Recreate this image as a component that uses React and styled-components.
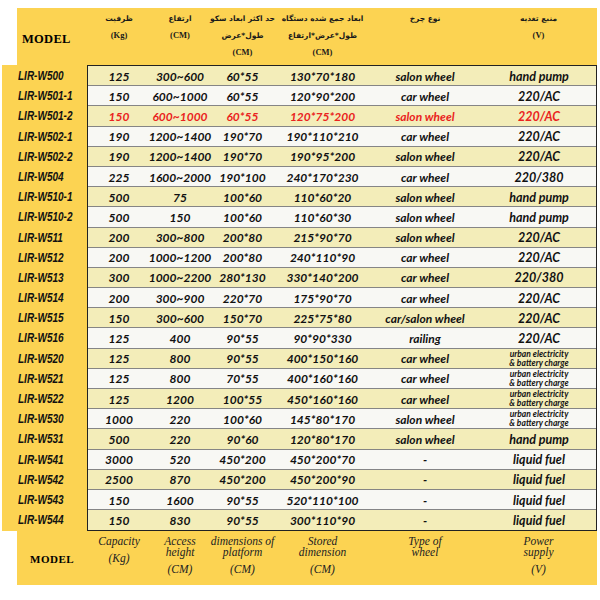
import React from 'react';
import styled, { createGlobalStyle } from 'styled-components';

const URBAN = 'urban';

const rows = [
  ['LIR-W500', '125', '300~600', '60*55', '130*70*180', 'salon wheel', 'hand pump'],
  ['LIR-W501-1', '150', '600~1000', '60*55', '120*90*200', 'car wheel', '220/AC'],
  ['LIR-W501-2', '150', '600~1000', '60*55', '120*75*200', 'salon wheel', '220/AC', true],
  ['LIR-W502-1', '190', '1200~1400', '190*70', '190*110*210', 'car wheel', '220/AC'],
  ['LIR-W502-2', '190', '1200~1400', '190*70', '190*95*200', 'salon wheel', '220/AC'],
  ['LIR-W504', '225', '1600~2000', '190*100', '240*170*230', 'car wheel', '220/380'],
  ['LIR-W510-1', '500', '75', '100*60', '110*60*20', 'salon wheel', 'hand pump'],
  ['LIR-W510-2', '500', '150', '100*60', '110*60*30', 'salon wheel', 'hand pump'],
  ['LIR-W511', '200', '300~800', '200*80', '215*90*70', 'salon wheel', '220/AC'],
  ['LIR-W512', '200', '1000~1200', '200*80', '240*110*90', 'car wheel', '220/AC'],
  ['LIR-W513', '300', '1000~2200', '280*130', '330*140*200', 'car wheel', '220/380'],
  ['LIR-W514', '200', '300~900', '220*70', '175*90*70', 'car wheel', '220/AC'],
  ['LIR-W515', '150', '300~600', '150*70', '225*75*80', 'car/salon wheel', '220/AC'],
  ['LIR-W516', '125', '400', '90*55', '90*90*330', 'railing', '220/AC'],
  ['LIR-W520', '125', '800', '90*55', '400*150*160', 'car wheel', URBAN],
  ['LIR-W521', '125', '800', '70*55', '400*160*160', 'car wheel', URBAN],
  ['LIR-W522', '125', '1200', '100*55', '450*160*160', 'car wheel', URBAN],
  ['LIR-W530', '1000', '220', '100*60', '145*80*170', 'salon wheel', URBAN],
  ['LIR-W531', '500', '220', '90*60', '120*80*170', 'salon wheel', 'hand pump'],
  ['LIR-W541', '3000', '520', '450*200', '450*200*70', '-', 'liquid fuel'],
  ['LIR-W542', '2500', '870', '450*200', '450*200*90', '-', 'liquid fuel'],
  ['LIR-W543', '150', '1600', '90*55', '520*110*100', '-', 'liquid fuel'],
  ['LIR-W544', '150', '830', '90*55', '300*110*90', '-', 'liquid fuel'],
];

const headers = [
  { fa: ['ظرفیت'], unit: '(Kg)' },
  { fa: ['ارتفاع'], unit: '(CM)' },
  { fa: ['حد اکثر ابعاد سکو', 'طول*عرض'], unit: '(CM)' },
  { fa: ['ابعاد جمع شده دستگاه', 'طول*عرض*ارتفاع'], unit: '(CM)' },
  { fa: ['نوع چرخ'], unit: '' },
  { fa: ['منبع تغذیه'], unit: '(V)' },
];

const footers = [
  { title: ['Capacity'], unit: '(Kg)' },
  { title: ['Access', 'height'], unit: '(CM)' },
  { title: ['dimensions of', 'platform'], unit: '(CM)' },
  { title: ['Stored', 'dimension'], unit: '(CM)' },
  { title: ['Type of', 'wheel'], unit: '' },
  { title: ['Power', 'supply'], unit: '(V)' },
];

export default function App() {
  return (
    <Page>
      <GlobalStyle />
      <HeadBand>
        <HeadModel>MODEL</HeadModel>
        {headers.map((h, i) => (
          <HeadCell key={i}>
            {h.fa.map(line => (
              <FaLine key={line}>{line}</FaLine>
            ))}
            {h.unit && <HeadUnit>{h.unit}</HeadUnit>}
          </HeadCell>
        ))}
      </HeadBand>
      <Body>
        <ModelColumn>
          {rows.map(r => (
            <ModelName key={r[0]}>
              <Narrow>{r[0]}</Narrow>
            </ModelName>
          ))}
        </ModelColumn>
        <Table>
          {rows.map((r, i) => (
            <Row key={r[0]} $odd={i % 2 === 0} $red={r[7]} $last={i === rows.length - 1}>
              {r.slice(1, 6).map((v, j) => (
                <Cell key={j}>{v}</Cell>
              ))}
              <PowerCell>
                {r[6] === URBAN ? (
                  <Small>
                    urban electricity
                    <br />& battery charge
                  </Small>
                ) : (
                  r[6]
                )}
              </PowerCell>
            </Row>
          ))}
        </Table>
      </Body>
      <FootBand>
        <FootModel>MODEL</FootModel>
        {footers.map((f, i) => (
          <FootCell key={i}>
            <FootTitle>
              {f.title.map(line => (
                <div key={line}>{line}</div>
              ))}
            </FootTitle>
            {f.unit && <FootUnit>{f.unit}</FootUnit>}
          </FootCell>
        ))}
      </FootBand>
    </Page>
  );
}

const YELLOW = '#fcd352';
const COLS = '62px 60px 65px 95px 110px 1fr';

const GlobalStyle = createGlobalStyle`
  html, body {
    margin: 0;
    background: #ffffff;
  }
`;

const Page = styled.div`
  width: 600px;
  height: 600px;
  padding-top: 8px;
  box-sizing: border-box;
  overflow: hidden;
`;

const HeadBand = styled.div`
  margin-left: 17px;
  width: 580px;
  height: 57px;
  background: ${YELLOW};
  display: grid;
  grid-template-columns: 71px ${COLS};
`;

const HeadModel = styled.div`
  align-self: center;
  padding-top: 5px;
  font-family: 'Liberation Serif', serif;
  font-weight: bold;
  font-size: 12.5px;
  letter-spacing: 0.3px;
  padding-left: 5px;
`;

const HeadCell = styled.div`
  padding-top: 2px;
  text-align: center;
  font-size: 8px;
  line-height: 17px;
  font-weight: bold;
  color: #1a1a1a;
`;

const FaLine = styled.div`
  font-family: 'DejaVu Sans', sans-serif;
  direction: rtl;
  font-size: 7.5px;
`;

const HeadUnit = styled.div`
  font-family: 'Liberation Serif', serif;
  font-size: 8.5px;
`;

const Body = styled.div`
  display: flex;
`;

const ModelColumn = styled.div`
  margin-left: 2px;
  width: 85px;
  background: ${YELLOW};
  padding-top: 1px;
`;

const ModelName = styled.div`
  height: 20.2px;
  line-height: 20px;
  padding-left: 16px;
  white-space: nowrap;
  font-family: 'Liberation Sans', sans-serif;
  font-weight: bold;
  font-style: italic;
  font-size: 12.5px;
  color: #111;
`;

const Narrow = styled.span`
  display: inline-block;
  transform: scaleX(0.8);
  transform-origin: left center;
`;

const Table = styled.div`
  width: 510px;
  box-sizing: border-box;
  border: 1px solid #222;
  border-width: 1px 1.5px 1.5px 1.5px;
`;

const Row = styled.div`
  display: grid;
  grid-template-columns: ${COLS};
  height: 20.2px;
  box-sizing: border-box;
  border-bottom: ${p => (p.$last ? 'none' : '1px solid #858585')};
  background: ${p => (p.$odd ? '#f3edb9' : '#f8f8f4')};
  color: ${p => (p.$red ? '#ea2320' : '#111')};
  font-family: Lato, sans-serif;
  font-weight: bold;
  font-style: italic;
  font-size: 12px;
`;

const Cell = styled.div`
  display: flex;
  align-items: center;
  justify-content: center;
  white-space: nowrap;
  padding-top: 1px;
`;

const PowerCell = styled(Cell)`
  padding-left: 2px;
  font-size: 12.5px;
`;

const Small = styled.div`
  font-size: 8.5px;
  line-height: 9px;
  text-align: center;
`;

const FootBand = styled.div`
  margin-left: 17px;
  width: 580px;
  height: 54px;
  background: ${YELLOW};
  display: grid;
  grid-template-columns: 71px ${COLS};
`;

const FootModel = styled.div`
  align-self: center;
  padding-top: 2px;
  padding-left: 13px;
  font-family: 'Liberation Serif', serif;
  font-weight: bold;
  font-size: 11px;
  letter-spacing: 0.5px;
`;

const FootCell = styled.div`
  padding-top: 5px;
  text-align: center;
  white-space: nowrap;
  font-family: 'Liberation Serif', serif;
  font-style: italic;
  font-size: 11.5px;
  color: #222;
`;

const FootTitle = styled.div`
  line-height: 11px;
`;

const FootUnit = styled.div`
  margin-top: 6px;
  line-height: 11px;
`;
